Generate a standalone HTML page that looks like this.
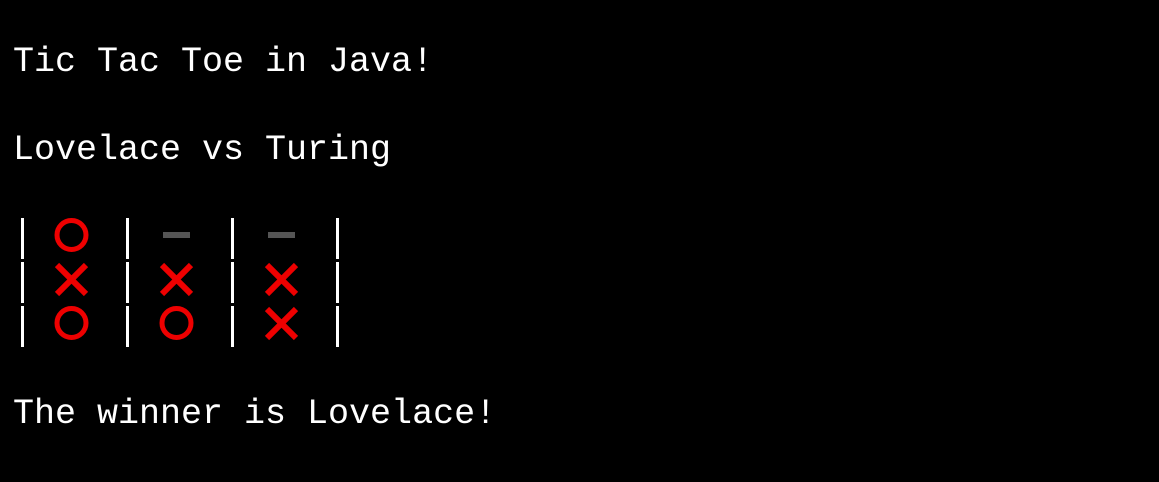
<!DOCTYPE html>
<html><head><meta charset="utf-8"><style>
html,body{margin:0;padding:0;background:#000;width:1159px;height:482px;overflow:hidden}
.t{position:absolute;left:13px;color:#fff;font-family:"Liberation Mono","DejaVu Sans Mono",monospace;font-size:35px;line-height:44px;white-space:pre}
svg{position:absolute;left:0;top:0}
</style></head><body>
<div class="t" style="top:40px">Tic Tac Toe in Java!</div>
<div class="t" style="top:128px">Lovelace vs Turing</div>
<div class="t" style="top:392px">The winner is Lovelace!</div>
<svg width="1159" height="482" viewBox="0 0 1159 482">
<g fill="#fff">
<rect x="21" y="218" width="3" height="41"/><rect x="126" y="218" width="3" height="41"/><rect x="231" y="218" width="3" height="41"/><rect x="336" y="218" width="3" height="41"/>
<rect x="21" y="262" width="3" height="41"/><rect x="126" y="262" width="3" height="41"/><rect x="231" y="262" width="3" height="41"/><rect x="336" y="262" width="3" height="41"/>
<rect x="21" y="306" width="3" height="41"/><rect x="126" y="306" width="3" height="41"/><rect x="231" y="306" width="3" height="41"/><rect x="336" y="306" width="3" height="41"/>
</g>
<g fill="none" stroke="#e00" stroke-width="5">
<circle cx="71.5" cy="235" r="14.5"/>
<circle cx="71.5" cy="323" r="14.5"/>
<circle cx="176.5" cy="323" r="14.5"/>
</g>
<g stroke="#e00" stroke-width="6">
<path d="M57 265L86 294M86 265L57 294"/>
<path d="M162 265L191 294M191 265L162 294"/>
<path d="M267 265L296 294M296 265L267 294"/>
<path d="M267 309L296 338M296 309L267 338"/>
</g>
<g fill="#555">
<rect x="163" y="232" width="27" height="6"/>
<rect x="268" y="232" width="27" height="6"/>
</g>
</svg>
</body></html>
